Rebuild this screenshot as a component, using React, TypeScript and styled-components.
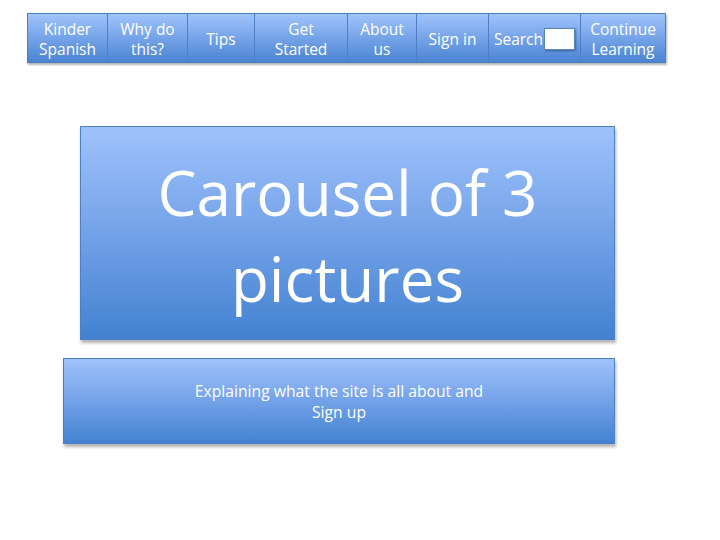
import React from "react";
import styled, { createGlobalStyle } from "styled-components";

const Global = createGlobalStyle`
  html, body { margin: 0; padding: 0; background: #ffffff; }
  body { font-family: "Open Sans", "Liberation Sans", sans-serif; }
`;

const Page = styled.div`
  width: 720px;
  height: 540px;
  display: flex;
  flex-direction: column;
  align-items: flex-start;
  padding-top: 13px;
  box-sizing: border-box;
`;

const blueGradient = `linear-gradient(180deg, #9fc3fb 0%, #7aa6ea 45%, #4a84d2 100%)`;

const Nav = styled.nav`
  display: flex;
  margin-left: 27px;
  height: 50px;
  box-shadow: 1px 2px 2px rgba(0, 0, 0, 0.3);
`;

const NavItem = styled.div<{ $w: number }>`
  width: ${(p) => p.$w}px;
  box-sizing: border-box;
  border: 1px solid #4d7fc4;
  background: ${blueGradient};
  color: #ffffff;
  font-size: 15.5px;
  line-height: 20px;
  text-align: center;
  display: flex;
  align-items: center;
  justify-content: center;
  gap: 1px;
  padding-top: 2px;
  & + & { border-left: none; }
`;

const SearchBox = styled.div`
  width: 29px;
  height: 20px;
  background: #ffffff;
  border: 1px solid #5c84bd;
  box-shadow: 1px 1px 2px rgba(0, 0, 0, 0.35);
`;

const Panel = styled.div<{ $mt: number; $ml: number; $w: number; $h: number }>`
  margin-top: ${(p) => p.$mt}px;
  margin-left: ${(p) => p.$ml}px;
  width: ${(p) => p.$w}px;
  height: ${(p) => p.$h}px;
  box-sizing: border-box;
  border: 1px solid #4d7fc4;
  background: linear-gradient(180deg, #9ec2fb 0%, #78a5ea 45%, #4382d1 100%);
  box-shadow: 1px 3px 3px rgba(0, 0, 0, 0.3);
  color: #ffffff;
  display: flex;
  align-items: center;
  justify-content: center;
  text-align: center;
`;

const CarouselText = styled.div`
  font-size: 62px;
  line-height: 86px;
  padding-top: 4px;
`;

const InfoText = styled.div`
  font-size: 15.7px;
  line-height: 21px;
  padding-top: 2px;
`;

const items: { w: number; label: React.ReactNode }[] = [
  { w: 81, label: <>Kinder<br />Spanish</> },
  { w: 80, label: <>Why do<br />this?</> },
  { w: 67, label: <>Tips</> },
  { w: 93, label: <>Get<br />Started</> },
  { w: 69, label: <>About<br />us</> },
  { w: 72, label: <>Sign in</> },
  { w: 92, label: <>Search<SearchBox /></> },
  { w: 85, label: <>Continue<br />Learning</> },
];

export default function App() {
  return (
    <>
      <Global />
      <Page>
        <Nav>
          {items.map((it, i) => (
            <NavItem key={i} $w={it.w}>
              {it.label}
            </NavItem>
          ))}
        </Nav>
        <Panel $mt={63} $ml={80} $w={535} $h={214}>
          <CarouselText>
            Carousel of 3<br />pictures
          </CarouselText>
        </Panel>
        <Panel $mt={18} $ml={63} $w={552} $h={86}>
          <InfoText>
            Explaining what the site is all about and
            <br />
            Sign up
          </InfoText>
        </Panel>
      </Page>
    </>
  );
}
